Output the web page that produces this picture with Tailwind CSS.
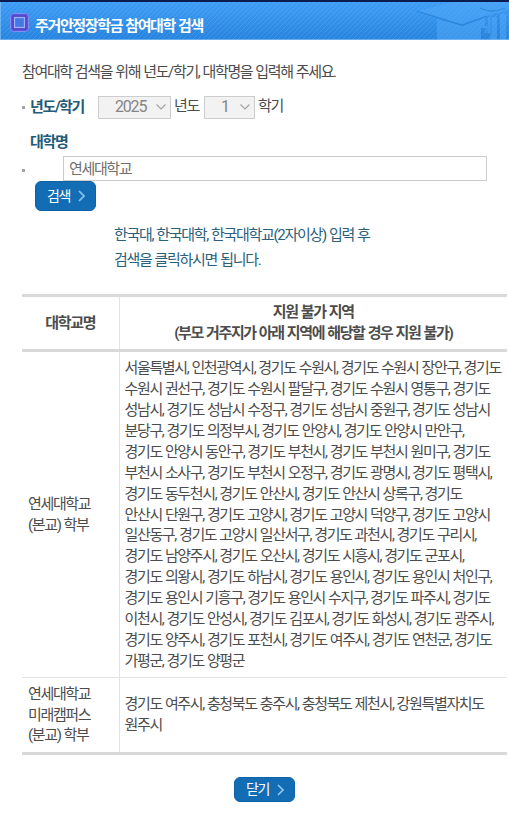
<!DOCTYPE html>
<html lang="ko">
<head>
  <meta charset="UTF-8" />
  <meta name="viewport" content="width=device-width, initial-scale=1.0" />
  <title>주거안정장학금 참여대학 검색</title>
  <script src="https://cdn.jsdelivr.net/npm/@tailwindcss/browser@4"></script>
</head>
<body class="bg-white font-[Roboto,'Noto_Sans_CJK_KR',sans-serif] text-[15px] leading-[21px] tracking-[-1.35px] [word-spacing:0.68px] text-[#4c4c4c] w-[509px] h-[813px] overflow-hidden">
  <header class="relative h-10 border-t-2 border-[#0a1c50] bg-linear-to-b from-[#3f9df6] to-[#2784de] overflow-hidden">
    <svg class="absolute inset-0 w-full h-full" viewBox="0 0 509 38" preserveAspectRatio="none">
      <defs>
        <pattern id="stripe" width="5" height="5" patternUnits="userSpaceOnUse">
          <path d="M-1 6L6 -1" stroke="#fff" stroke-opacity=".09" stroke-width="1" />
        </pattern>
      </defs>
      <rect width="509" height="38" fill="url(#stripe)" />
      <!-- graduation cap -->
      <g fill="#52aafa" fill-opacity=".5">
        <path d="M417 9L452 0H509V7L487 14L462 23Z" />
        <path d="M437 17L462 24L485 16V26H481V38H437Z" />
        <path d="M488 15H497V38H490V31H485V24H488Z" />
        <path d="M500 12H506V38H500Z" />
      </g>
      <path d="M417 9L462 23L487 14M480 6Q492 12 505 6" fill="none" stroke="#1c74c7" stroke-opacity=".5" stroke-width="1.3" />
      <path d="M482 38V27H487V33H491V15M498 38V12" fill="none" stroke="#1c74c7" stroke-opacity=".25" stroke-width="1.3" />
      <path d="M.5 0V38M0 37.5H509" stroke="#91c8f7" stroke-opacity=".6" />
    </svg>
    <div class="relative flex items-center pl-[10px] pt-[9px]">
      <svg class="w-[19px] h-[19px] shrink-0 -mt-[2px]" viewBox="0 0 19 19">
        <rect x=".5" y=".5" width="18" height="18" rx="3" fill="#5a55dc" stroke="#7f8ff2" />
        <rect x="2.5" y="2.5" width="14" height="14" rx="1" fill="#4a42c4" />
        <rect x="4.5" y="4.5" width="10" height="10" fill="#4379e4" stroke="#a3aefb" stroke-width="1.3" />
      </svg>
      <h1 class="ml-[6px] mt-[5px] font-bold text-[15px] leading-5 tracking-[-1.35px] text-white">주거안정장학금 참여대학 검색</h1>
    </div>
  </header>

  <main class="pl-[22px] pr-[2px]">
    <p class="mt-[22px]">참여대학 검색을 위해 년도/학기, 대학명을 입력해 주세요.</p>

    <div class="flex items-center mt-[12px] h-6">
      <span class="w-[3px] h-[3px] bg-[#a5a5a5] mr-[5px]"></span>
      <b class="text-[#215b78] w-[68px]">년도/학기</b>
      <div class="w-[73px] h-[23px] border border-[#ccc] bg-[#f2f2f2] flex items-center justify-between pl-4 pr-1 text-[#858585] tracking-[-1.2px] text-base">
        2025
        <svg class="w-[10px] h-[6px]" viewBox="0 0 10 6" fill="none" stroke="#a3a3a3" stroke-width="1.2"><path d="M.5 .5L5 5L9.5 .5" /></svg>
      </div>
      <span class="ml-[3px] w-[30px] -mt-[2px]">년도</span>
      <div class="w-[51px] h-[23px] border border-[#ccc] bg-[#f2f2f2] flex items-center justify-between pl-4 pr-1 text-[#858585] text-base">
        1
        <svg class="w-[10px] h-[6px]" viewBox="0 0 10 6" fill="none" stroke="#a3a3a3" stroke-width="1.2"><path d="M.5 .5L5 5L9.5 .5" /></svg>
      </div>
      <span class="ml-[3px] -mt-[2px]">학기</span>
    </div>

    <b class="block ml-2 mt-[13px] text-[#215b78]">대학명</b>
    <div class="flex items-center mt-[3px]">
      <span class="w-[3px] h-[3px] bg-[#a5a5a5] mt-1"></span>
      <div class="ml-[38px] w-[424px] h-[25px] border border-[#ccc] pl-[5px] leading-[24px] text-[#707070]">연세대학교</div>
    </div>
    <button class="flex items-center ml-[13px] w-[61px] h-[30px] rounded-md bg-[#126db5] border border-[#0e62a8] text-white text-sm tracking-[-1.35px] pl-[11px] pb-px">
      검색
      <svg class="ml-[8px] mt-px w-[7px] h-[12px]" viewBox="0 0 7 12" fill="none" stroke="#8cc6ef" stroke-width="1.7"><path d="M1 1L6 6L1 11" /></svg>
    </button>

    <p class="ml-[92px] mt-[12px] leading-[25px] tracking-[-1.3px] text-[#2b607b]">한국대, 한국대학, 한국대학교(2자이상) 입력 후<br />검색을 클릭하시면 됩니다.</p>

    <table class="mt-[21px] w-[485px] table-fixed border-collapse">
      <colgroup>
        <col class="w-[97px]" />
        <col />
      </colgroup>
      <thead>
        <tr class="h-[55px] border-y-3 border-[#d9d9d9]">
          <th class="font-bold border-r border-[#e3e3e3]">대학교명</th>
          <th class="font-bold">지원 불가 지역<br />(부모 거주지가 아래 지역에 해당할 경우 지원 불가)</th>
        </tr>
      </thead>
      <tbody class="leading-[20.93px] whitespace-nowrap">
        <tr class="h-[327px] border-b border-[#e3e3e3]">
          <td class="pl-[6px] border-r border-[#e3e3e3]">연세대학교<br />(본교) 학부</td>
          <td class="pl-[5px] pt-px">
            서울특별시, 인천광역시, 경기도 수원시, 경기도 수원시 장안구, 경기도<br />
            수원시 권선구, 경기도 수원시 팔달구, 경기도 수원시 영통구, 경기도<br />
            성남시, 경기도 성남시 수정구, 경기도 성남시 중원구, 경기도 성남시<br />
            분당구, 경기도 의정부시, 경기도 안양시, 경기도 안양시 만안구,<br />
            경기도 안양시 동안구, 경기도 부천시, 경기도 부천시 원미구, 경기도<br />
            부천시 소사구, 경기도 부천시 오정구, 경기도 광명시, 경기도 평택시,<br />
            경기도 동두천시, 경기도 안산시, 경기도 안산시 상록구, 경기도<br />
            안산시 단원구, 경기도 고양시, 경기도 고양시 덕양구, 경기도 고양시<br />
            일산동구, 경기도 고양시 일산서구, 경기도 과천시, 경기도 구리시,<br />
            경기도 남양주시, 경기도 오산시, 경기도 시흥시, 경기도 군포시,<br />
            경기도 의왕시, 경기도 하남시, 경기도 용인시, 경기도 용인시 처인구,<br />
            경기도 용인시 기흥구, 경기도 용인시 수지구, 경기도 파주시, 경기도<br />
            이천시, 경기도 안성시, 경기도 김포시, 경기도 화성시, 경기도 광주시,<br />
            경기도 양주시, 경기도 포천시, 경기도 여주시, 경기도 연천군, 경기도<br />
            가평군, 경기도 양평군
          </td>
        </tr>
        <tr class="h-[76px] border-b-3 border-[#d9d9d9]">
          <td class="pl-[6px] border-r border-[#e3e3e3]">연세대학교<br />미래캠퍼스<br />(분교) 학부</td>
          <td class="pl-[5px]">경기도 여주시, 충청북도 충주시, 충청북도 제천시, 강원특별자치도<br />원주시</td>
        </tr>
      </tbody>
    </table>

    <button class="flex items-center ml-[212px] mt-[22px] w-[61px] h-[25px] rounded-md bg-[#126db5] border border-[#0e62a8] text-white text-sm tracking-[-1.35px] pl-[11px] pb-px">
      닫기
      <svg class="ml-[8px] mt-px w-[7px] h-[12px]" viewBox="0 0 7 12" fill="none" stroke="#8cc6ef" stroke-width="1.7"><path d="M1 1L6 6L1 11" /></svg>
    </button>
  </main>
</body>
</html>
